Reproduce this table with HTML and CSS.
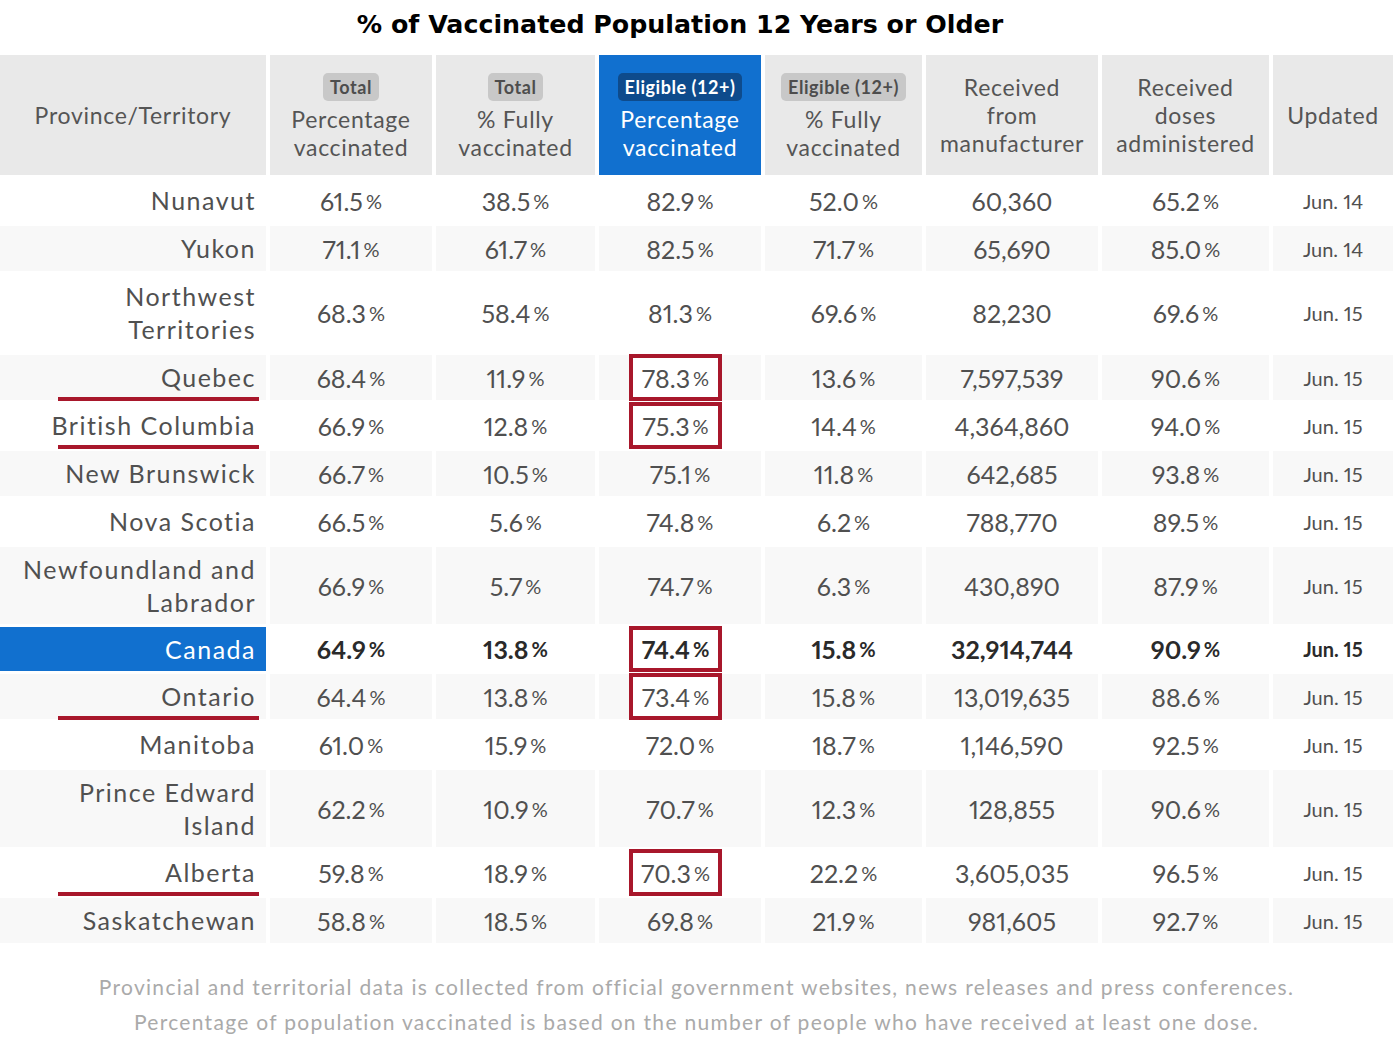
FILE: index.html
```html
<!DOCTYPE html>
<html lang="en">
<head>
<meta charset="utf-8">
<title>% of Vaccinated Population 12 Years or Older</title>
<link rel="stylesheet" href="styles.css">
</head>
<body>
<h1 class="title">% of Vaccinated Population 12 Years or Older</h1>
<div class="grid">
  <div class="row head">
    <div class="hc">Province/Territory</div>
    <div class="hc badged"><span class="badge">Total</span><span class="hl">Percentage<br>vaccinated</span></div>
    <div class="hc badged"><span class="badge">Total</span><span class="hl">% Fully<br>vaccinated</span></div>
    <div class="hc badged blue"><span class="badge dark">Eligible (12+)</span><span class="hl">Percentage<br>vaccinated</span></div>
    <div class="hc badged"><span class="badge">Eligible (12+)</span><span class="hl">% Fully<br>vaccinated</span></div>
    <div class="hc"><span class="hl">Received<br>from<br>manufacturer</span></div>
    <div class="hc"><span class="hl">Received<br>doses<br>administered</span></div>
    <div class="hc">Updated</div>
  </div>

  <div class="row">
    <div class="prov">Nunavut</div>
    <div class="v">61.5<span class="pc">%</span></div>
    <div class="v">38.5<span class="pc">%</span></div>
    <div class="v">82.9<span class="pc">%</span></div>
    <div class="v">52.0<span class="pc">%</span></div>
    <div class="v">60,360</div>
    <div class="v">65.2<span class="pc">%</span></div>
    <div class="d">Jun. 14</div>
  </div>
  <div class="row alt">
    <div class="prov">Yukon</div>
    <div class="v">71.1<span class="pc">%</span></div>
    <div class="v">61.7<span class="pc">%</span></div>
    <div class="v">82.5<span class="pc">%</span></div>
    <div class="v">71.7<span class="pc">%</span></div>
    <div class="v">65,690</div>
    <div class="v">85.0<span class="pc">%</span></div>
    <div class="d">Jun. 14</div>
  </div>
  <div class="row tall">
    <div class="prov">Northwest<br>Territories</div>
    <div class="v">68.3<span class="pc">%</span></div>
    <div class="v">58.4<span class="pc">%</span></div>
    <div class="v">81.3<span class="pc">%</span></div>
    <div class="v">69.6<span class="pc">%</span></div>
    <div class="v">82,230</div>
    <div class="v">69.6<span class="pc">%</span></div>
    <div class="d">Jun. 15</div>
  </div>
  <div class="row alt">
    <div class="prov ul">Quebec</div>
    <div class="v">68.4<span class="pc">%</span></div>
    <div class="v">11.9<span class="pc">%</span></div>
    <div class="v"><span class="box">78.3<span class="pc">%</span></span></div>
    <div class="v">13.6<span class="pc">%</span></div>
    <div class="v">7,597,539</div>
    <div class="v">90.6<span class="pc">%</span></div>
    <div class="d">Jun. 15</div>
  </div>
  <div class="row">
    <div class="prov ul">British Columbia</div>
    <div class="v">66.9<span class="pc">%</span></div>
    <div class="v">12.8<span class="pc">%</span></div>
    <div class="v"><span class="box">75.3<span class="pc">%</span></span></div>
    <div class="v">14.4<span class="pc">%</span></div>
    <div class="v">4,364,860</div>
    <div class="v">94.0<span class="pc">%</span></div>
    <div class="d">Jun. 15</div>
  </div>
  <div class="row alt">
    <div class="prov">New Brunswick</div>
    <div class="v">66.7<span class="pc">%</span></div>
    <div class="v">10.5<span class="pc">%</span></div>
    <div class="v">75.1<span class="pc">%</span></div>
    <div class="v">11.8<span class="pc">%</span></div>
    <div class="v">642,685</div>
    <div class="v">93.8<span class="pc">%</span></div>
    <div class="d">Jun. 15</div>
  </div>
  <div class="row">
    <div class="prov">Nova Scotia</div>
    <div class="v">66.5<span class="pc">%</span></div>
    <div class="v">5.6<span class="pc">%</span></div>
    <div class="v">74.8<span class="pc">%</span></div>
    <div class="v">6.2<span class="pc">%</span></div>
    <div class="v">788,770</div>
    <div class="v">89.5<span class="pc">%</span></div>
    <div class="d">Jun. 15</div>
  </div>
  <div class="row alt tall short">
    <div class="prov">Newfoundland and<br>Labrador</div>
    <div class="v">66.9<span class="pc">%</span></div>
    <div class="v">5.7<span class="pc">%</span></div>
    <div class="v">74.7<span class="pc">%</span></div>
    <div class="v">6.3<span class="pc">%</span></div>
    <div class="v">430,890</div>
    <div class="v">87.9<span class="pc">%</span></div>
    <div class="d">Jun. 15</div>
  </div>
  <div class="row total">
    <div class="prov blue">Canada</div>
    <div class="v">64.9<span class="pc">%</span></div>
    <div class="v">13.8<span class="pc">%</span></div>
    <div class="v"><span class="box">74.4<span class="pc">%</span></span></div>
    <div class="v">15.8<span class="pc">%</span></div>
    <div class="v">32,914,744</div>
    <div class="v">90.9<span class="pc">%</span></div>
    <div class="d">Jun. 15</div>
  </div>
  <div class="row alt">
    <div class="prov ul">Ontario</div>
    <div class="v">64.4<span class="pc">%</span></div>
    <div class="v">13.8<span class="pc">%</span></div>
    <div class="v"><span class="box">73.4<span class="pc">%</span></span></div>
    <div class="v">15.8<span class="pc">%</span></div>
    <div class="v">13,019,635</div>
    <div class="v">88.6<span class="pc">%</span></div>
    <div class="d">Jun. 15</div>
  </div>
  <div class="row">
    <div class="prov">Manitoba</div>
    <div class="v">61.0<span class="pc">%</span></div>
    <div class="v">15.9<span class="pc">%</span></div>
    <div class="v">72.0<span class="pc">%</span></div>
    <div class="v">18.7<span class="pc">%</span></div>
    <div class="v">1,146,590</div>
    <div class="v">92.5<span class="pc">%</span></div>
    <div class="d">Jun. 15</div>
  </div>
  <div class="row alt tall short">
    <div class="prov">Prince Edward<br>Island</div>
    <div class="v">62.2<span class="pc">%</span></div>
    <div class="v">10.9<span class="pc">%</span></div>
    <div class="v">70.7<span class="pc">%</span></div>
    <div class="v">12.3<span class="pc">%</span></div>
    <div class="v">128,855</div>
    <div class="v">90.6<span class="pc">%</span></div>
    <div class="d">Jun. 15</div>
  </div>
  <div class="row">
    <div class="prov ul">Alberta</div>
    <div class="v">59.8<span class="pc">%</span></div>
    <div class="v">18.9<span class="pc">%</span></div>
    <div class="v"><span class="box">70.3<span class="pc">%</span></span></div>
    <div class="v">22.2<span class="pc">%</span></div>
    <div class="v">3,605,035</div>
    <div class="v">96.5<span class="pc">%</span></div>
    <div class="d">Jun. 15</div>
  </div>
  <div class="row alt">
    <div class="prov">Saskatchewan</div>
    <div class="v">58.8<span class="pc">%</span></div>
    <div class="v">18.5<span class="pc">%</span></div>
    <div class="v">69.8<span class="pc">%</span></div>
    <div class="v">21.9<span class="pc">%</span></div>
    <div class="v">981,605</div>
    <div class="v">92.7<span class="pc">%</span></div>
    <div class="d">Jun. 15</div>
  </div>
</div>
<div class="foot">
  <p>Provincial and territorial data is collected from official government websites, news releases and press conferences.</p>
  <p>Percentage of population vaccinated is based on the number of people who have received at least one dose.</p>
</div>
</body>
</html>
```

FILE: styles.css
```css
html, body {
  margin: 0;
  padding: 0;
  background: #ffffff;
}

body {
  width: 1393px;
  font-family: "Lato", "Open Sans", sans-serif;
  color: #505050;
}

.title {
  margin: 0;
  height: 55px;
  padding: 10px 33px 0 0;
  box-sizing: border-box;
  text-align: center;
  font-family: "DejaVu Sans", "Verdana", sans-serif;
  font-weight: bold;
  font-size: 25.3px;
  line-height: 30px;
  color: #000;
}

.grid {
  display: grid;
  grid-template-columns: 266px 162px 159px 162px 157px 172px 167px 120px;
  column-gap: 4px;
  row-gap: 3px;
}

.row {
  display: contents;
}

.row > div {
  height: 45px;
  box-sizing: border-box;
  display: flex;
  align-items: center;
  justify-content: center;
  background: #ffffff;
  font-size: 25px;
  letter-spacing: 0.06em;
}

.row.tall > div {
  height: 78px;
}

.row.tall.short > div {
  height: 77px;
}

.row.total > div {
  height: 44px;
}

.row.alt > div {
  background: #f8f8f8;
}

/* header */
.row.head > .hc {
  height: 120px;
  flex-direction: column;
  background: #e9e9e9;
  color: #555;
  font-size: 23px;
  line-height: 28px;
  letter-spacing: 0.03em;
  text-align: center;
}

.row.head > .hc.badged {
  padding-top: 4px;
}

.row.head > .hc.blue {
  background: #1170cf;
  color: #ffffff;
}

.badge {
  display: inline-block;
  height: 28px;
  line-height: 28px;
  padding: 0 7px;
  margin-bottom: 4px;
  border-radius: 5px;
  background: #c8c8c8;
  color: #4d4d4d;
  font-weight: 700;
  font-size: 18px;
  letter-spacing: 0.03em;
}

.badge.dark {
  background: #0e4b8c;
  color: #ffffff;
}

/* body cells */
.row > .prov {
  justify-content: flex-end;
  text-align: right;
  padding-right: 10px;
  line-height: 33px;
  position: relative;
}

.row > .prov.blue {
  background: #1170cf;
  color: #ffffff;
}

.prov.ul::after {
  content: "";
  position: absolute;
  left: 58px;
  right: 7px;
  bottom: -1px;
  height: 4px;
  background: #a8172b;
}

.row > .v {
  letter-spacing: 0;
  font-variant-numeric: proportional-nums;
}

.pc {
  font-size: 0.8em;
  margin-left: 3px;
}

.row > .d {
  font-size: 20px;
  letter-spacing: 0;
  font-variant-numeric: proportional-nums;
}

.row.total > div {
  font-weight: 700;
  color: #2a2a2a;
}

.row.total > .prov {
  font-weight: 400;
  color: #ffffff;
}

.box {
  align-self: stretch;
  display: flex;
  align-items: center;
  justify-content: center;
  width: 93px;
  box-sizing: border-box;
  margin: -1px 9px -1px 0;
  border: 4px solid #a8172b;
  background: #ffffff;
}

.foot {
  margin-top: 26px;
  text-align: center;
  color: #aaaaaa;
  font-size: 21px;
  line-height: 35px;
  letter-spacing: 1.3px;
}

.foot p {
  margin: 0;
}
```
